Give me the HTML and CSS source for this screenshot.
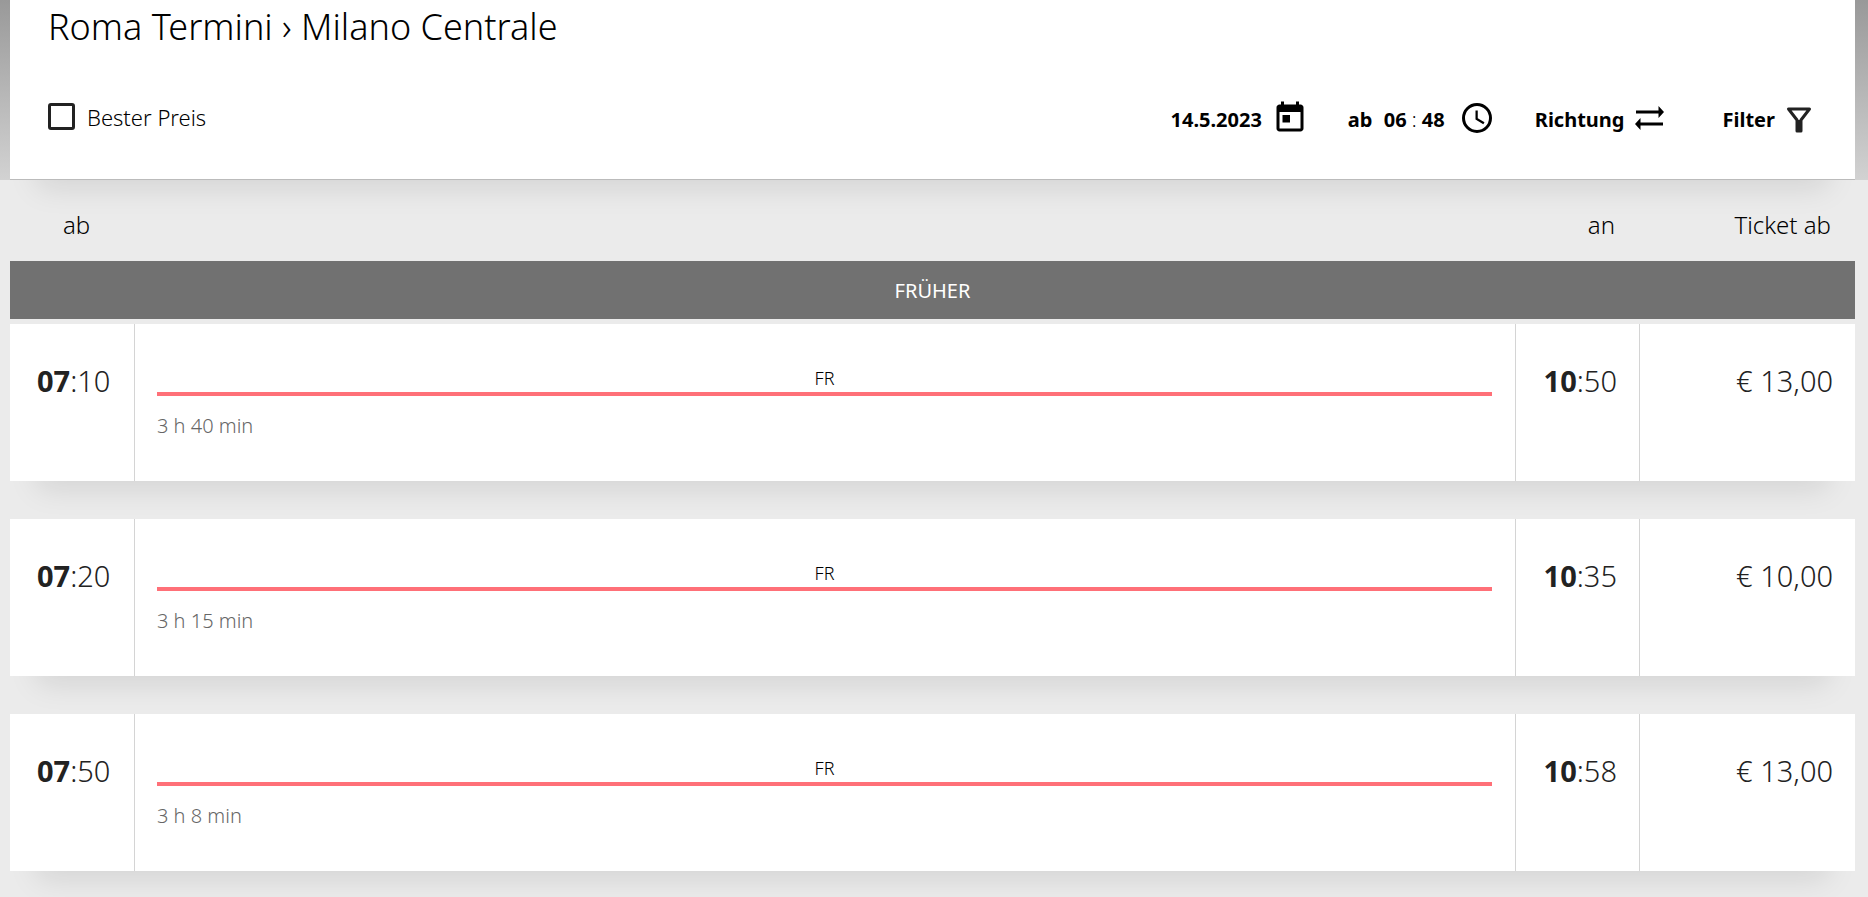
FILE: index.html
```html
<!DOCTYPE html>
<html lang="de">
<head>
    <meta charset="UTF-8">
    <title>Roma Termini › Milano Centrale</title>
    <meta name="viewport" content="width=device-width, initial-scale=1.0">
    <link rel="stylesheet" href="styles.css">
</head>
<body>
    <header class="top">
        <div class="search">
            <h1>Roma Termini › Milano Centrale</h1>
            <div class="toolbar">
                <label class="best-price"><input type="checkbox"> Bester Preis</label>
                <div class="actions">
                    <button type="button" class="action">
                        14.5.2023
                        <svg class="icon" viewBox="0 0 24 24"><path d="M19 3h-1V1h-2v2H8V1H6v2H5c-1.1 0-2 .9-2 2v14c0 1.1.9 2 2 2h14c1.1 0 2-.9 2-2V5c0-1.1-.9-2-2-2zm0 16H5V8h14v11zM7 10h5v5H7z"/></svg>
                    </button>
                    <button type="button" class="action time">
                        <span>ab <span class="clock">06 <i>:</i> 48</span></span>
                        <svg class="icon" viewBox="0 0 24 24"><path d="M12 2a10 10 0 1 0 0 20 10 10 0 0 0 0-20zm0 18a8 8 0 1 1 0-16 8 8 0 0 1 0 16zM12.500 7H11v6l5.200 3.200.8-1.300-4.500-2.700z"/></svg>
                    </button>
                    <button type="button" class="action">
                        Richtung
                        <svg class="icon" viewBox="0 0 36 36"><path d="M5 10.500h22.500V6l5.500 6-5.500 6v-4.500H5zM32 22.500H9.500V18L4 24l5.500 6v-4.500H32z"/></svg>
                    </button>
                    <button type="button" class="action filter">
                        Filter
                        <svg class="icon" viewBox="0 0 36 36"><path class="funnel" d="M7.500 9h21L20 20v11h-4V20z"/><path d="M15 20h6v12h-6z"/></svg>
                    </button>
                </div>
            </div>
        </div>
    </header>
    <main>
        <table class="results">
            <thead>
                <tr class="labels">
                    <th>ab</th>
                    <th></th>
                    <th class="right">an</th>
                    <th class="right">Ticket ab</th>
                </tr>
                <tr class="earlier">
                    <td colspan="4"><button type="button">FRÜHER</button></td>
                </tr>
            </thead>
            <tbody>
                <tr>
                    <td><b>07</b>:10</td>
                    <td class="route"><div class="train">FR</div><div class="duration">3 h 40 min</div></td>
                    <td class="right"><b>10</b>:50</td>
                    <td class="right">€ 13,00</td>
                </tr>
                <tr>
                    <td><b>07</b>:20</td>
                    <td class="route"><div class="train">FR</div><div class="duration">3 h 15 min</div></td>
                    <td class="right"><b>10</b>:35</td>
                    <td class="right">€ 10,00</td>
                </tr>
                <tr>
                    <td><b>07</b>:50</td>
                    <td class="route"><div class="train">FR</div><div class="duration">3 h 8 min</div></td>
                    <td class="right"><b>10</b>:58</td>
                    <td class="right">€ 13,00</td>
                </tr>
            </tbody>
        </table>
    </main>
</body>
</html>
```

FILE: styles.css
```css
* { box-sizing: border-box; }
body { margin: 0; background: #ebebeb; color: #000; font-family: "Noto Sans", "Open Sans", sans-serif; font-weight: 350; }
button { padding: 0; border: 0; background: none; color: inherit; font-family: inherit; cursor: pointer; }

.top { padding: 0 13px 0 10px; background: linear-gradient(#999, #d2d2d2); }
.search { padding: 3px 38px 42px; background: #fff; border-bottom: 1px solid #bbb; box-shadow: 0 35px 28px -27px rgba(0, 0, 0, 0.1); }
h1 { margin: 0 0 45px; font-size: 36px; line-height: 48px; font-weight: 350; }

.toolbar { display: flex; justify-content: space-between; align-items: center; height: 41px; }
.best-price { display: flex; align-items: center; gap: 12px; font-size: 22px; line-height: 32px; }
.best-price input { appearance: none; width: 27px; height: 27px; margin: 0; border: 3px solid #222; border-radius: 3px; }
.best-price input:checked { background: #222; }

.actions { display: flex; gap: 40px; padding-top: 3px; }
.action { display: flex; align-items: flex-end; gap: 6px; font-size: 20px; line-height: 32px; font-weight: 700; }
.time { gap: 14px; }
.filter { margin-left: 16px; }
.icon { width: 36px; height: 36px; }
.filter .icon { fill: #222; }
.funnel { fill: none; stroke: #222; stroke-width: 3; stroke-linejoin: round; }
.action:first-child { gap: 10px; }
.clock { margin-left: 6px; }
.clock i { font-style: normal; font-weight: 300; }

main { padding: 0 13px 38px 10px; }
.results { display: block; }
.results thead, .results tbody { display: flex; flex-direction: column; }
.results tr { display: grid; grid-template-columns: 124px 1fr 124px 216px; }
.results th, .results td { padding: 0; }
.results .right { text-align: right; }

.labels { padding: 29px 0 20px; font-size: 24px; line-height: 32px; }
.labels th { padding: 0 24px 0 53px; font-weight: 350; text-align: left; }
.results .earlier { display: block; margin-bottom: 5px; }
.earlier td { display: block; }
.earlier button { width: 100%; height: 58px; background: #717171; color: #fff; font-size: 20px; }

.results tbody { gap: 38px; }
.results tbody tr { height: 157px; background: #fff; color: #222; font-size: 29px; line-height: 40px; box-shadow: 0 35px 28px -27px rgba(0, 0, 0, 0.1); }
.results tbody td { padding: 37px 22px 0 27px; }
.results tbody td + td { padding-left: 0; border-left: 1px solid #d4d4d4; }
.results tbody .route { padding: 42px 23px 0 22px; }
.results b { font-weight: 700; }
.train { padding-bottom: 1px; border-bottom: 4px solid #ff7078; color: #000; font-size: 18px; line-height: 25px; text-align: center; }
.duration { margin-top: 16px; color: #666; font-size: 20px; line-height: 28px; }
```
